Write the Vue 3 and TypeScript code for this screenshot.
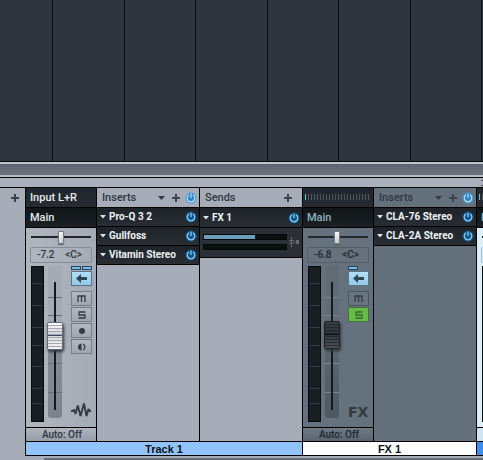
<script setup lang="ts">
import { ref } from 'vue'

interface Channel {
  id: string
  kind: 'audio' | 'fx' | 'selected'
  input?: string
  level: string
  pan: number
  fader: number
}

interface Rack {
  title: string
  fx: boolean
  slots: string[]
}

const track = ref<Channel>({ id: 'track1', kind: 'audio', input: 'Input L+R', level: '-7.2', pan: 50, fader: 55 })
const fx = ref<Channel>({ id: 'fx1', kind: 'fx', level: '-6.8', pan: 49, fader: 56 })
const next = ref<Channel>({ id: 'next', kind: 'selected', level: '', pan: 50, fader: 55 })

const trackRack: Rack = { title: 'Inserts', fx: false, slots: ['Pro-Q 3 2', 'Gullfoss', 'Vitamin Stereo'] }
const fxRack: Rack = { title: 'Inserts', fx: true, slots: ['CLA-76 Stereo', 'CLA-2A Stereo'] }
const sendLevel = 62

type Section =
  | { type: 'strip'; channel: Channel }
  | { type: 'rack'; rack: Rack }
  | { type: 'sends' }

const groups: { name: string; tone: string; sections: Section[] }[] = [
  {
    name: 'Track 1',
    tone: 'blue',
    sections: [{ type: 'strip', channel: track.value }, { type: 'rack', rack: trackRack }, { type: 'sends' }],
  },
  {
    name: 'FX 1',
    tone: 'white',
    sections: [{ type: 'strip', channel: fx.value }, { type: 'rack', rack: fxRack }],
  },
  { name: '', tone: 'bright', sections: [{ type: 'strip', channel: next.value }] },
]
</script>

<template>
  <div class="app">
    <div class="arrange"></div>
    <div class="scrollbar"></div>
    <div class="toolbar"><span class="grip"></span></div>
    <main class="mixer">
      <aside class="side">
        <button class="icon" aria-label="Add channel">
          <svg width="10" height="10" viewBox="0 0 10 10"><path d="M4 1h2v3h3v2H6v3H4V6H1V4h3z" fill="#3c434b" /></svg>
        </button>
      </aside>

      <section v-for="(group, g) in groups" :key="g" class="group" :class="group.tone">
        <div class="sections">
          <template v-for="(s, i) in group.sections" :key="i">
            <div v-if="s.type === 'strip'" class="strip" :class="s.channel.kind">
              <button v-if="s.channel.input" class="route top">{{ s.channel.input }}</button>
              <div v-else class="route top ticks"><i></i></div>
              <button class="route main">Main</button>
              <div class="body">
                <input v-model="s.channel.pan" class="pan" type="range" min="0" max="100" aria-label="Pan" />
                <div class="value">
                  <span>{{ s.channel.level }}</span>
                  <span v-if="s.channel.level">&lt;C&gt;</span>
                </div>
                <div class="controls">
                  <div class="meter"></div>
                  <div class="fader-well">
                    <input v-model="s.channel.fader" class="fader" type="range" min="0" max="100" aria-label="Volume" />
                  </div>
                  <div class="buttons">
                    <div class="leds"><i></i><i v-if="s.channel.kind === 'audio'"></i></div>
                    <button class="key lit" aria-label="Channel view">
                      <svg width="12" height="9" viewBox="0 0 12 9"><path d="M0 4.5 5 0v3h6v3H5v3z" fill="#2e4656" /></svg>
                    </button>
                    <button class="key" aria-label="Mute">
                      <svg width="9" height="7" viewBox="0 0 9 7"><path d="M1 7V1h7v6M4.5 1v6" fill="none" stroke="#343b43" stroke-width="1.3" /></svg>
                    </button>
                    <button class="key" :class="{ solo: s.channel.kind === 'fx' }" aria-label="Solo">
                      <svg width="8" height="8" viewBox="0 0 8 8"><path d="M7.5 1H1v3h6v3H.5" fill="none" stroke="currentColor" stroke-width="1.3" /></svg>
                    </button>
                    <template v-if="s.channel.kind === 'audio'">
                      <button class="key" aria-label="Record">
                        <svg width="8" height="8" viewBox="0 0 8 8"><circle cx="4" cy="4" r="3" fill="#343b43" /></svg>
                      </button>
                      <button class="key" aria-label="Monitor">
                        <svg width="10" height="8" viewBox="0 0 10 8"><path d="M4.500 .5v7C1.500 7 1 5.500 1 4s.5-3 3.500-3.500z" fill="#343b43" /><path d="M6 1c2.500 1 2.500 5 0 6" fill="none" stroke="#343b43" stroke-width="1.300" /></svg>
                      </button>
                    </template>
                    <svg v-if="s.channel.kind === 'audio'" class="kind" width="20" height="17" viewBox="0 0 20 17">
                      <path d="M0 9h2l1-1.500L4.500 12 6.800 3.500 9.500 14 13 1.500 15.500 14 17.500 7l1 2H20" fill="none" stroke="#343b43" stroke-width="1.900" stroke-linejoin="bevel" />
                    </svg>
                    <span v-else-if="s.channel.kind === 'fx'" class="kind fx-mark">FX</span>
                  </div>
                </div>
              </div>
              <button class="auto" aria-label="Automation mode">{{ s.channel.level ? 'Auto: Off' : '' }}</button>
            </div>

            <div v-else-if="s.type === 'rack'" class="rack" :class="{ dim: s.rack.fx }">
              <header class="rack-head">
                <span class="title">{{ s.rack.title }}</span>
                <button class="icon" aria-label="Insert menu">
                  <svg width="7" height="4" viewBox="0 0 7 4"><path d="M0 0h7L3.500 4z" fill="#343b43" /></svg>
                </button>
                <button class="icon add" aria-label="Add insert">
                  <svg width="10" height="10" viewBox="0 0 10 10"><path d="M4 1h2v3h3v2H6v3H4V6H1V4h3z" fill="#3c434b" /></svg>
                </button>
                <button class="icon power" aria-label="Toggle all inserts">
                  <svg width="12" height="12" viewBox="0 0 12 12"><circle cx="6" cy="6" r="6" fill="#4aa5e3" opacity=".45" /><circle cx="6" cy="6" r="4.800" fill="#2b86c8" /><path d="M4 2.800a3.800 3.800 0 1 0 4 0M6 1.500V6" fill="none" stroke="#b5e0fb" stroke-width="1.200" /></svg>
                </button>
              </header>
              <ul class="slots">
                <li v-for="slot in s.rack.slots" :key="slot" class="slot">
                  <button class="plugin">
                    <svg width="6" height="4" viewBox="0 0 6 4"><path d="M0 0h6L3 3.500z" fill="#dce3e8" /></svg>
                    {{ slot }}
                  </button>
                  <button class="icon power" :aria-label="'Toggle ' + slot">
                    <svg width="12" height="12" viewBox="0 0 12 12"><circle cx="6" cy="6" r="6" fill="#14507f" opacity=".5" /><circle cx="6" cy="6" r="4.800" fill="#14568a" /><path d="M4 2.800a3.800 3.800 0 1 0 4 0M6 1.500V6" fill="none" stroke="#83caf7" stroke-width="1.300" /></svg>
                  </button>
                </li>
              </ul>
            </div>

            <div v-else class="rack">
              <header class="rack-head">
                <span class="title">Sends</span>
                <button class="icon send-add" aria-label="Add send">
                  <svg width="10" height="10" viewBox="0 0 10 10"><path d="M4 1h2v3h3v2H6v3H4V6H1V4h3z" fill="#3c434b" /></svg>
                </button>
              </header>
              <div class="slot send">
                <button class="plugin">
                  <svg width="6" height="4" viewBox="0 0 6 4"><path d="M0 0h6L3 3.500z" fill="#dce3e8" /></svg>
                  FX 1
                </button>
                <button class="icon power" aria-label="Toggle FX 1">
                  <svg width="12" height="12" viewBox="0 0 12 12"><circle cx="6" cy="6" r="6" fill="#14507f" opacity=".5" /><circle cx="6" cy="6" r="4.800" fill="#14568a" /><path d="M4 2.800a3.800 3.800 0 1 0 4 0M6 1.500V6" fill="none" stroke="#83caf7" stroke-width="1.300" /></svg>
                </button>
              </div>
              <div class="send-levels">
                <div class="bars">
                  <div class="bar"><i :style="{ width: sendLevel + '%' }"></i></div>
                  <div class="bar"></div>
                </div>
                <svg width="10" height="10" viewBox="0 0 10 10"><path d="M2.500 0v10M0 3.500h5M0 6h5M5 5h2" fill="none" stroke="#626a72" /><path d="M7 3h3v4H7z" fill="#626a72" /></svg>
              </div>
            </div>
          </template>
        </div>
        <div class="label">{{ group.name }}</div>
      </section>
    </main>
    <footer class="footer"><div class="footer-track"></div></footer>
  </div>
</template>

<style>
body {
  margin: 0;
  background: #a6adb8;
}
</style>

<style scoped>
.app {
  display: flex;
  flex-direction: column;
  min-height: 100vh;
  overflow: hidden;
  font: 500 11px/14px Roboto, 'Liberation Sans', sans-serif;
  color: #2f363e;
}
button {
  margin: 0;
  padding: 0;
  border: 0;
  background: none;
  font: inherit;
  color: inherit;
}
svg {
  display: block;
  flex: none;
}
.arrange {
  flex: 1;
  min-height: 120px;
  border-bottom: 1px solid #05080c;
  background: linear-gradient(90deg, transparent 52px, #070d14 52px 53px, transparent 53px 124px, #070d14 124px 125px, transparent 125px) 0 0 / 143px 100% #2e353f;
}
.scrollbar {
  height: 11px;
  border-top: 2px solid #bfc4cc;
  border-bottom: 2px solid #b7bdc5;
  background: linear-gradient(#5e656f, #6b717b);
}
.toolbar {
  display: flex;
  justify-content: flex-end;
  align-items: center;
  height: 9px;
  border-top: 1px solid #06090c;
  background: #a9b0bb;
}
.grip {
  width: 2px;
  height: 4px;
  border-top: 1px solid #4b525a;
  border-bottom: 1px solid #4b525a;
}
.mixer {
  display: flex;
  background: #a6adb8;
}
.side {
  display: flex;
  justify-content: flex-end;
  align-items: flex-start;
  box-sizing: border-box;
  flex: none;
  width: 25px;
  padding: 5px;
  border-top: 1px solid #06090c;
}
.group {
  display: flex;
  flex-direction: column;
  flex: none;
  border-left: 1px solid #000;
}
.sections {
  display: flex;
  flex: 1;
  gap: 1px;
  border-top: 1px solid #06090c;
  background: #000;
}
.label {
  height: 13px;
  border-top: 1px solid #000;
  border-bottom: 1px solid #000;
  background: #92c3fb;
  color: #0a1420;
  font: 700 11px/14px 'Liberation Sans', sans-serif;
  text-align: center;
}
.white .label {
  background: #fff;
}
.bright .label {
  background: #3e8df0;
}
.strip {
  display: flex;
  flex-direction: column;
  width: 70px;
  background: linear-gradient(90deg, #b1b6be, #a4abb6);
}
.strip.fx {
  background: #65727d;
}
.strip.selected {
  background: #dceef8;
}
.route {
  box-sizing: border-box;
  height: 20px;
  padding-left: 4px;
  border-bottom: 1px solid #000;
  background: linear-gradient(#20262b, #262c31);
  color: #e2eaf0;
  text-align: left;
}
.route.main {
  background: linear-gradient(#101417, #1c2125);
}
.fx .main,
.selected .main {
  color: #8ab4c2;
}
.route.ticks {
  padding: 6px 2px;
}
.ticks i {
  display: block;
  height: 6px;
  border-left: 1px solid #5ec4d6;
  background: repeating-linear-gradient(90deg, transparent 0 2px, #50575c 2px 3px);
}
.body {
  display: flex;
  flex-direction: column;
  flex: 1;
  padding: 2px 4px 5px;
}
input {
  appearance: none;
  margin: 0;
  background: none;
}
.pan {
  width: 100%;
  height: 14px;
  background: linear-gradient(#22272c, #22272c) center / calc(100% - 2px) 2px no-repeat;
}
.pan::-webkit-slider-thumb {
  appearance: none;
  width: 6px;
  height: 13px;
  border: 1px solid #767c83;
  border-radius: 1px;
  box-sizing: border-box;
  background: linear-gradient(#f4f5f6, #c9ccd0);
  box-shadow: 0 1px 1px #555b62;
}
.value {
  display: flex;
  justify-content: space-between;
  box-sizing: border-box;
  height: 16px;
  margin-top: 3px;
  padding: 0 9px 0 6px;
  border: 1px solid #858c96;
  border-radius: 2px;
  font-size: 10px;
}
.fx .value {
  border-color: #515d67;
  color: #1e262e;
}
.selected .value {
  border-color: #9fc2d4;
}
.controls {
  display: flex;
  margin-top: 3px;
  padding-left: 1px;
}
.meter {
  box-sizing: border-box;
  width: 13px;
  height: 156px;
  border: 1px solid #06090b;
  background: linear-gradient(transparent 16px, #353c41 16px 17px, transparent 17px 38px, #353c41 38px 39px, transparent 39px 60px, #353c41 60px 61px, transparent 61px 78px, #353c41 78px 79px, transparent 79px 99px, #353c41 99px 100px, transparent 100px 121px, #353c41 121px 122px, transparent 122px 136px, #353c41 136px 137px, transparent 137px) #191e22;
}
.fader-well {
  width: 14px;
  height: 152px;
  margin-left: 4px;
  border-radius: 3px;
  background:
    linear-gradient(#15191d, #15191d) 6px 16px / 2px 128px no-repeat,
    linear-gradient(transparent 31px, #676e77 31px 32px, transparent 32px 49px, #676e77 49px 50px, transparent 50px 97px, #676e77 97px 98px, transparent 98px 126px, #676e77 126px 127px, transparent 127px),
    linear-gradient(#a4abb5 60px, #858d97 80px, #7b838c);
}
.fx .fader-well {
  background:
    linear-gradient(#15191d, #15191d) 6px 16px / 2px 128px no-repeat,
    linear-gradient(transparent 31px, #7b8791 31px 32px, transparent 32px 49px, #7b8791 49px 50px, transparent 50px 97px, #7b8791 97px 98px, transparent 98px 126px, #7b8791 126px 127px, transparent 127px),
    linear-gradient(#5f6c76 60px, #4c5862);
}
.fader {
  display: block;
  width: 16px;
  height: 152px;
  margin: 0 -1px;
  writing-mode: vertical-lr;
  direction: rtl;
}
.fader::-webkit-slider-thumb {
  appearance: none;
  box-sizing: border-box;
  width: 16px;
  height: 28px;
  border: 1px solid #696e75;
  border-radius: 2px;
  background:
    linear-gradient(transparent 12px, #3c4568 12px 13px, transparent 13px),
    repeating-linear-gradient(transparent 0 2px, #a3a7ae 2px 3px),
    linear-gradient(#fff, #d3d6da 40%, #f3f4f5);
  box-shadow: 1px 2px 3px #30363c;
}
.fx .fader::-webkit-slider-thumb {
  border-color: #1d2226;
  background:
    linear-gradient(transparent 12px, #0b0e11 12px 13px, transparent 13px),
    repeating-linear-gradient(transparent 0 2px, #252b30 2px 3px),
    linear-gradient(#3a4147, #2d3338 40%, #4b5156);
}
.buttons {
  display: flex;
  flex-direction: column;
  gap: 1px;
  width: 21px;
  margin-left: auto;
}
.leds {
  display: flex;
  gap: 1px;
  height: 4px;
}
.leds i {
  box-sizing: border-box;
  width: 10px;
  border: 1px solid #24435a;
  background: #79bde6;
}
.key {
  display: grid;
  place-items: center;
  box-sizing: border-box;
  height: 15px;
  border: 1px solid #767d87;
  background: linear-gradient(#b3b8c0, #9fa6b0);
  color: #343b43;
}
.fx .key {
  border-color: #49545d;
  background: #68747f;
}
.key.lit,
.fx .key.lit {
  margin-bottom: 4px;
  border-color: #567487;
  background: linear-gradient(#b4def6, #93c8e8);
}
.fx .key.solo {
  border-color: #48703d;
  background: #67bb4a;
  color: #2f6b25;
}
.kind {
  margin-top: auto;
  margin-bottom: 3px;
}
.fx-mark {
  color: #303941;
  font: 700 14px/14px 'DejaVu Sans', sans-serif;
}
.auto {
  box-sizing: border-box;
  height: 14px;
  border-top: 1px solid #000;
  background: linear-gradient(#afb4bd, #979ea8);
  font-size: 10px;
  padding-left: 2px;
}
.fx .auto {
  background: linear-gradient(#6d7984, #59656f);
  color: #20272e;
}
.selected .auto {
  background: #cfe5f2;
}
.rack {
  display: flex;
  flex-direction: column;
  width: 102px;
  background: #a6adb8;
}
.rack.dim {
  background: #64717c;
}
.icon {
  display: grid;
  place-items: center;
}
.rack-head {
  display: flex;
  align-items: center;
  box-sizing: border-box;
  height: 20px;
  padding: 0 2px 0 5px;
  border-bottom: 1px solid #000;
}
.title {
  flex: 1;
}
.add {
  margin: 0 4px 0 6px;
}
.send-add {
  margin-right: 7px;
}
.slots {
  margin: 0;
  padding: 0;
  list-style: none;
}
.slot {
  display: flex;
  align-items: center;
  box-sizing: border-box;
  height: 19px;
  padding: 0 2px 0 3px;
  border-bottom: 1px solid #000;
  background: linear-gradient(#1d2328, #282e34);
}
.slot.send {
  height: 20px;
}
.plugin {
  display: flex;
  align-items: center;
  flex: 1;
  gap: 3px;
  color: #eef2f5;
  font-size: 10px;
  font-weight: 700;
  white-space: nowrap;
}
.send-levels {
  display: flex;
  align-items: center;
  justify-content: space-between;
  padding: 6px 3px 7px;
  border-bottom: 1px solid #000;
  background: #2a3036;
}
.bars {
  display: flex;
  flex-direction: column;
  gap: 4px;
  width: 84px;
}
.bar {
  box-sizing: border-box;
  height: 6px;
  border: 1px solid #050708;
  background: #0c0f11;
}
.bar i {
  display: block;
  height: 4px;
  background: #6c9dbd;
}
.footer {
  display: flex;
  padding: 2px 0 0 44px;
  background: #a6adb8;
}
.footer-track {
  flex: 1;
  height: 2px;
  background: #666d76;
}
</style>
